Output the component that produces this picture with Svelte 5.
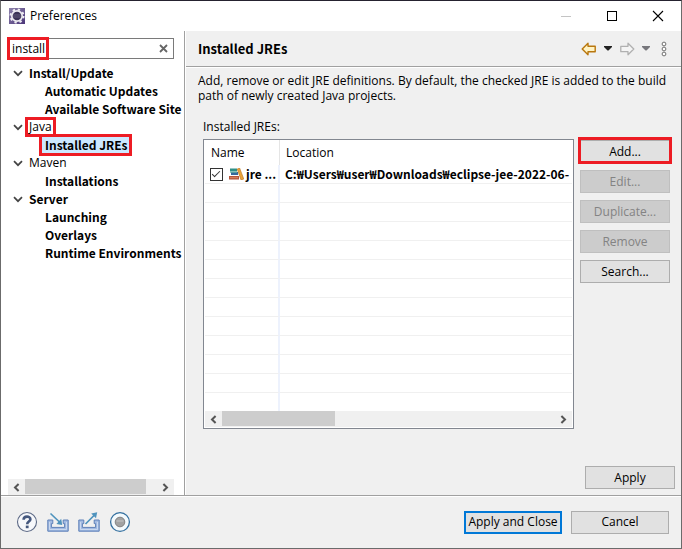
<script>
  let query = $state('install');
  let checked = $state(true);
  const tree = [
    { label: 'Install/Update', bold: true, children: ['Automatic Updates', 'Available Software Site'] },
    { label: 'Java', marked: true, children: ['Installed JREs'] },
    { label: 'Maven', children: ['Installations'] },
    { label: 'Server', bold: true, children: ['Launching', 'Overlays', 'Runtime Environments'] }
  ];
  const selected = 'Installed JREs';
  const actions = [
    { label: 'Add...', marked: true },
    { label: 'Edit...', disabled: true },
    { label: 'Duplicate...', disabled: true },
    { label: 'Remove', disabled: true },
    { label: 'Search...' }
  ];
  const emptyRows = Array(11).fill(0);
</script>

{#snippet scrollbar(start, size)}
  <div class="scrollbar">
    <button class="arrow" aria-label="Scroll left">
      <svg width="7" height="9" viewBox="0 0 7 9"><path d="M5.6 1 2 4.5 5.6 8" fill="none" stroke="#555" stroke-width="2" /></svg>
    </button>
    <div class="track"><div class="thumb" style="margin-left: {start}%; width: {size}%"></div></div>
    <button class="arrow" aria-label="Scroll right">
      <svg width="7" height="9" viewBox="0 0 7 9"><path d="M1.4 1 5 4.5 1.4 8" fill="none" stroke="#555" stroke-width="2" /></svg>
    </button>
  </div>
{/snippet}

{#snippet caret(color)}
  <svg width="8" height="5" viewBox="0 0 8 5"><path d="M0 0H8V1L4.5 4.5H3.5L0 1Z" fill={color} /></svg>
{/snippet}

<div class="window">
  <header class="titlebar">
    <svg width="16" height="16" viewBox="0 0 16 16">
      <defs>
        <linearGradient id="badge" x1="0" y1="0" x2="1" y2="1">
          <stop offset="0" stop-color="#8f84ad" /><stop offset="1" stop-color="#4a3478" />
        </linearGradient>
      </defs>
      <rect width="16" height="16" fill="url(#badge)" />
      <circle cx="8" cy="8" r="6.5" fill="none" stroke="#f0eef4" stroke-width="2" stroke-dasharray="2.3 2.8" />
      <circle cx="8" cy="8" r="5.2" fill="#3b3356" stroke="#eceaf0" stroke-width="1.7" />
      <path d="M4 7H12M4 9H12" stroke="#6c6684" stroke-width=".8" />
    </svg>
    <span class="caption">Preferences</span>
    <div class="controls">
      <button aria-label="Minimize"><svg width="12" height="12" viewBox="0 0 12 12"><path d="M1 6.5H11" stroke="#c4c4c4" /></svg></button>
      <button aria-label="Maximize"><svg width="12" height="12" viewBox="0 0 12 12"><rect x="1.5" y="1.5" width="9" height="9" fill="none" stroke="#000" /></svg></button>
      <button aria-label="Close"><svg width="12" height="12" viewBox="0 0 12 12"><path d="M1 1 11 11M11 1 1 11" stroke="#000" stroke-width="1.1" /></svg></button>
    </div>
  </header>

  <div class="body">
    <aside>
      <div class="search">
        <input type="text" aria-label="Filter preferences" bind:value={query} />
        <button aria-label="Clear filter">
          <svg width="9" height="9" viewBox="0 0 9 9"><path d="M1 1 8 8M8 1 1 8" stroke="#666" stroke-width="1.8" /></svg>
        </button>
      </div>
      <ul class="tree">
        {#each tree as group}
          <li>
            <div class="row" class:bold={group.bold}>
              <svg width="10" height="7" viewBox="0 0 10 7"><path d="M1 1.2 5 5.2 9 1.2" fill="none" stroke="#444" stroke-width="1.7" /></svg>
              <span class:mark={group.marked}>{group.label}</span>
            </div>
            <ul>
              {#each group.children as item}
                <li class="row leaf bold"><span class:selected={item === selected} class:mark={item === selected}>{item}</span></li>
              {/each}
            </ul>
          </li>
        {/each}
      </ul>
      {@render scrollbar(0, 92)}
    </aside>

    <main>
      <div class="heading">
        <h1>Installed JREs</h1>
        <div class="tools">
          <button aria-label="Back">
            <svg width="16" height="14" viewBox="0 0 16 14"><path d="M7 1.2V4.3H14.2V9.7H7V12.8L1.2 7Z" fill="#fff3c4" stroke="#b9770e" stroke-width="1.4" stroke-linejoin="round" /></svg>
          </button>
          <button aria-label="Back history">{@render caret('#222')}</button>
          <button aria-label="Forward" disabled>
            <svg width="16" height="14" viewBox="0 0 16 14"><path d="M9 1.2V4.3H1.8V9.7H9V12.8L14.8 7Z" fill="#f4f4f4" stroke="#b0b0b0" stroke-width="1.3" stroke-linejoin="round" /></svg>
          </button>
          <button aria-label="Forward history" disabled>{@render caret('#77777c')}</button>
          <button class="more" aria-label="View menu">
            <svg width="6" height="16" viewBox="0 0 6 16"><g fill="#fff" stroke="#707070"><circle cx="3" cy="3" r="1.9" /><circle cx="3" cy="8" r="1.9" /><circle cx="3" cy="13" r="1.9" /></g></svg>
          </button>
        </div>
      </div>

      <div class="page">
        <p>Add, remove or edit JRE definitions. By default, the checked JRE is added to the build path of newly created Java projects.</p>
        <div class="label" id="jres">Installed JREs:</div>
        <div class="editor">
          <div class="list">
            <table aria-labelledby="jres">
              <colgroup><col class="name" /><col /></colgroup>
              <thead><tr><th>Name</th><th>Location</th></tr></thead>
              <tbody>
                <tr>
                  <td>
                    <div class="entry">
                      <input type="checkbox" aria-label="jre" bind:checked />
                      <svg width="15" height="12" viewBox="0 0 15 12">
                        <rect x="1" y="0.5" width="7" height="3" fill="#2f8f87" />
                        <rect x="2" y="4" width="7" height="3" fill="#36699c" />
                        <path d="M1 4.2H8" stroke="#68b5a0" />
                        <rect x="0" y="8" width="10" height="3.5" fill="#b5543a" />
                        <path d="M1 9.7H9" stroke="#dc8a62" />
                        <path d="M8.2 1 10.6 0 14.8 11 12 12Z" fill="#e9a33a" stroke="#b8701c" stroke-width=".6" />
                      </svg>
                      <span>jre ...</span>
                    </div>
                  </td>
                  <td>C:₩Users₩user₩Downloads₩eclipse-jee-2022-06-</td>
                </tr>
                {#each emptyRows as _}
                  <tr><td></td><td></td></tr>
                {/each}
                <tr class="last"><td></td><td></td></tr>
              </tbody>
            </table>
            {@render scrollbar(0, 34)}
          </div>
          <div class="actions">
            {#each actions as a}
              <button class="btn" class:mark={a.marked} disabled={a.disabled}>{a.label}</button>
            {/each}
          </div>
        </div>
        <div class="apply"><button class="btn">Apply</button></div>
      </div>
    </main>
  </div>

  <footer>
    <button class="icon" aria-label="Help">
      <svg width="22" height="22" viewBox="0 0 22 22">
        <circle cx="11" cy="11" r="9.5" fill="#f7f8fb" stroke="#5d6a86" stroke-width="1.1" />
        <path d="M7.6 8.8C7.6 4.6 14.4 4.8 14.4 8.2C14.4 10.6 11.2 10.6 11.2 13.2" fill="none" stroke="#45587e" stroke-width="2.6" />
        <rect x="9.8" y="14.6" width="2.8" height="2.6" fill="#45587e" />
      </svg>
    </button>
    <button class="icon" aria-label="Import">
      <svg width="22" height="22" viewBox="0 0 22 22">
        <path d="M5.8 9H.8V20.2H21.2V9H16.2V12.6H17.6V16.4H4.4V12.6H5.8Z" fill="#a3bbe2" stroke="#5e80b8" />
        <path d="M2.5 11V18.5H19.5V11" fill="none" stroke="#d4e0f3" stroke-width=".8" />
        <path d="M3.5 2.5 13 11.5" stroke="#4f93bd" stroke-width="1.7" />
        <path d="M15.2 14 9.4 13 14.2 7.8Z" fill="#4f93bd" />
      </svg>
    </button>
    <button class="icon" aria-label="Export">
      <svg width="22" height="22" viewBox="0 0 22 22">
        <path d="M5.8 9H.8V20.2H21.2V9H16.2V12.6H17.6V16.4H4.4V12.6H5.8Z" fill="#a3bbe2" stroke="#5e80b8" />
        <path d="M2.5 11V18.5H19.5V11" fill="none" stroke="#d4e0f3" stroke-width=".8" />
        <path d="M7.5 13 16.5 4" stroke="#4f93bd" stroke-width="1.7" />
        <path d="M19.2 1.2 18 7.2 13.2 2.4Z" fill="#4f93bd" />
      </svg>
    </button>
    <button class="icon" aria-label="Record preferences">
      <svg width="22" height="22" viewBox="0 0 22 22">
        <circle cx="11" cy="11" r="9.4" fill="#f4fafd" stroke="#336f9f" stroke-width="1.3" />
        <circle cx="11" cy="11" r="4.8" fill="#a2a2a2" stroke="#828282" />
        <path d="M7.5 10H14.5" stroke="#bababa" stroke-width="1.5" />
      </svg>
    </button>
    <div class="spacer"></div>
    <button class="btn wide primary">Apply and Close</button>
    <button class="btn wide">Cancel</button>
  </footer>
</div>

<style>
  .window {
    box-sizing: border-box;
    min-height: 100vh;
    display: flex;
    flex-direction: column;
    border: 1px solid #6b6b6b;
    border-top-color: #25222f;
    background: #f0f0f0;
    color: #000;
    font: 12px/18px 'Open Sans', 'Noto Sans CJK KR', sans-serif;
  }
  button {
    font: inherit;
    color: inherit;
    padding: 0;
    border: 0;
    background: none;
    display: flex;
    align-items: center;
    justify-content: center;
  }
  svg { display: block; flex: none; }
  ul { list-style: none; margin: 0; padding: 0; }

  .titlebar { display: flex; align-items: center; height: 30px; padding-left: 8px; background: #fff; }
  .caption { margin-left: 5px; flex: 1; }
  .controls { display: flex; }
  .controls button { width: 46px; height: 28px; }

  .body { flex: 1; display: flex; }
  aside {
    box-sizing: border-box;
    width: 184px;
    flex: none;
    display: flex;
    flex-direction: column;
    padding: 7px 10px 0 7px;
    background: #fff;
    border-right: 1px solid #a0a0a0;
  }
  .search {
    position: relative;
    display: flex;
    align-items: center;
    height: 19px;
    border: 1px solid #7a7a7a;
  }
  .search input {
    flex: 1;
    min-width: 0;
    padding: 0 3px;
    border: 0;
    outline: 0;
    background: none;
    font: inherit;
  }
  .search button { width: 19px; height: 18px; }
  .search::after {
    content: '';
    position: absolute;
    inset: -2px auto -2px -2px;
    width: 36px;
    border: 3px solid #ed1c24;
  }
  .tree { flex: 1; overflow: hidden; padding-top: 5px; margin-right: -8px; }
  .row { display: flex; align-items: center; height: 18px; padding-left: 5px; gap: 6px; white-space: nowrap; }
  .leaf { padding-left: 34px; }
  .row span { padding: 0 2px; margin-left: -2px; }
  .leaf span { padding: 0 1px 0 3px; margin-left: 0; }
  .bold, td, h1 { font-family: 'Noto Sans CJK KR', 'Open Sans', sans-serif; font-weight: 700; }
  .selected { background: #cce8ff; }
  .mark { position: relative; }
  .mark::after {
    content: '';
    position: absolute;
    inset: -2px -3px;
    border: 3px solid #ed1c24;
    pointer-events: none;
  }
  .row:not(.leaf) .mark::after { inset: -1px -2px; }

  .scrollbar { display: flex; height: 16px; background: #f0f0f0; }
  .arrow { width: 17px; }
  .track { flex: 1; }
  .thumb { height: 15px; background: #cdcdcd; }

  main { flex: 1; min-width: 0; display: flex; flex-direction: column; border-left: 1px solid #fff; }
  .heading {
    display: flex;
    align-items: center;
    justify-content: space-between;
    height: 35px;
    padding: 0 14px 0 12px;
    border-bottom: 1px solid #a0a0a0;
    box-shadow: 0 1px #fff;
  }
  h1 { margin: 0; font-size: 13px; line-height: 18px; }
  .tools { display: flex; align-items: center; gap: 7px; }
  .more { margin-left: 4px; }

  .page { flex: 1; display: flex; flex-direction: column; padding: 6px 6px 6px 12px; }
  p { margin: 0; line-height: 15px; }
  .label { margin: 15px 0 3px 5px; }
  .editor { display: flex; align-items: flex-start; gap: 6px; padding: 0 5px; }
  .list { flex: 1; min-width: 0; padding: 0 1px 1px; border: 1px solid #828790; background: #fff; }
  table { width: 100%; table-layout: fixed; border-collapse: separate; border-spacing: 0; }
  .name { width: 75px; }
  th { height: 25px; padding: 0 6px; text-align: left; font-weight: 400; }
  th:first-child { border-right: 1px solid #e5e5e5; }
  td {
    height: 18px;
    padding: 0 0 0 5px;
    border-bottom: 1px solid #f0f0f0;
    overflow: hidden;
    white-space: nowrap;
  }
  td:first-child { border-right: 2px solid #edf2fd; }
  .last td { border-bottom: 0; }
  .entry { display: flex; align-items: center; }
  .entry svg { margin: 0 2px 0 6px; }
  .entry input {
    appearance: none;
    box-sizing: border-box;
    flex: none;
    width: 13px;
    height: 13px;
    margin: 0;
    border: 1px solid #333;
    background: #fff;
    position: relative;
  }
  .entry input:checked::after {
    content: '';
    position: absolute;
    left: 3px;
    top: 0;
    width: 3px;
    height: 7px;
    border: solid #333;
    border-width: 0 1px 1px 0;
    transform: rotate(45deg);
  }
  .actions { display: flex; flex-direction: column; gap: 7px; }
  .actions, .apply { padding-top: 1px; }
  .btn {
    box-sizing: border-box;
    width: 90px;
    height: 23px;
    border: 1px solid #adadad;
    background: #e1e1e1;
  }
  .btn:disabled { background: #ccc; border-color: #bfbfbf; color: #838383; }
  .btn.mark::after { inset: -4px -3px -2px; }
  .apply { flex: 1; display: flex; justify-content: flex-end; align-items: flex-end; }
  .wide { width: 98px; }
  .primary { border: 2px solid #0078d7; }

  footer {
    display: flex;
    align-items: center;
    gap: 9px;
    height: 52px;
    padding: 0 12px 0 15px;
    border-top: 1px solid #a0a0a0;
    box-shadow: inset 0 1px #fff;
  }
  .spacer { flex: 1; }
</style>
